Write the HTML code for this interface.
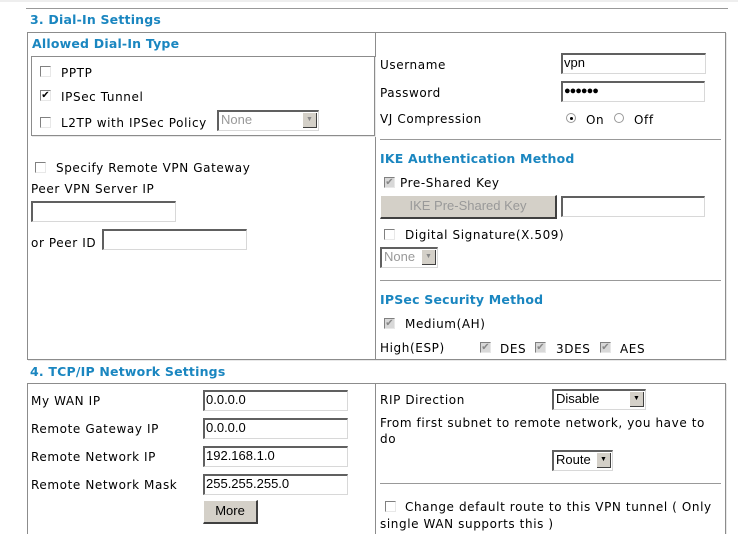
<!DOCTYPE html>
<html style="overflow:hidden;height:534px"><head><meta charset="utf-8"><style>
html,body{overflow:hidden}
body{margin:0;width:738px;height:534px;background:#fff;position:relative;overflow:hidden;font-family:"DejaVu Sans","Liberation Sans",sans-serif;font-size:12px;color:#000}
.t{position:absolute;line-height:16px;white-space:nowrap;letter-spacing:0.6px}
.h{position:absolute;line-height:16px;white-space:nowrap;color:#1a86c0;font-weight:bold;font-size:12.5px;letter-spacing:0.2px}
.b{position:absolute;border:1px solid #8c8c8c;box-shadow:1px 1px 0 #e8e8e8}
.l{position:absolute;background:#999;height:1px}
.v{position:absolute;background:#8c8c8c;width:1px}
.in{position:absolute;box-sizing:border-box;background:#fff;border-top:2px solid #606060;border-left:2px solid #606060;border-right:1px solid #d8d8d8;border-bottom:1px solid #d8d8d8;font-family:"Liberation Sans",sans-serif;font-size:13px;line-height:16px;padding-left:1px}
.cb{position:absolute;width:11px;height:11px;box-sizing:border-box;border-top:1px solid #808080;border-left:1px solid #808080;border-right:1px solid #e8e8e8;border-bottom:1px solid #e8e8e8;background:#fff;font-size:10px;line-height:9px;text-align:center}
.cb.g{background:#d8d8d8;color:#888}
.sel{position:absolute;box-sizing:border-box;background:#fff;border-top:2px solid #606060;border-left:2px solid #606060;border-right:1px solid #d8d8d8;border-bottom:1px solid #d8d8d8;font-family:"Liberation Sans",sans-serif;font-size:13px;line-height:16px;padding-left:2px}
.sel .ar{position:absolute;right:1px;top:1px;width:14px;height:15px;background:#d4d0c8;border-right:1px solid #404040;border-bottom:1px solid #404040;box-sizing:border-box;font-size:7px;line-height:14px;text-align:center}
.btn{position:absolute;box-sizing:border-box;background:#d4d0c8;border-top:1px solid #fff;border-left:1px solid #fff;border-right:2px solid #404040;border-bottom:2px solid #404040;font-family:"Liberation Sans",sans-serif;font-size:13px;text-align:center}
.rd{position:absolute;width:10px;height:10px;border-radius:50%;border:1px solid #999;box-sizing:border-box;background:#fff}
</style></head><body>
<div style="position:absolute;left:0;top:0;width:738px;height:2px;background:#eee"></div>
<div class="l" style="left:26px;top:8px;width:702px"></div>
<div class="h" style="left:30px;top:12px">3. Dial-In Settings</div>
<div class="b" style="left:27px;top:32px;width:697px;height:326px"></div>
<div class="v" style="left:375px;top:32px;height:327px"></div>
<div class="h" style="left:32px;top:36px">Allowed Dial-In Type</div>
<div class="b" style="left:31px;top:56px;width:342px;height:78px"></div>
<div class="cb" style="left:40px;top:66px"></div><div class="t" style="left:61px;top:65px">PPTP</div>
<div class="cb" style="left:40px;top:90px">✔</div><div class="t" style="left:61px;top:89px">IPSec Tunnel</div>
<div class="cb" style="left:40px;top:117px"></div><div class="t" style="left:61px;top:115px">L2TP with IPSec Policy</div>
<div class="sel" style="left:217px;top:110px;width:102px;height:21px;color:#999">None<div class="ar" style="color:#888">▼</div></div>
<div class="cb" style="left:35px;top:162px"></div><div class="t" style="left:56px;top:160px">Specify Remote VPN Gateway</div>
<div class="t" style="left:31px;top:181px">Peer VPN Server IP</div>
<div class="in" style="left:31px;top:201px;width:145px;height:21px"></div>
<div class="t" style="left:31px;top:235px">or Peer ID</div>
<div class="in" style="left:102px;top:229px;width:145px;height:21px"></div>

<div class="t" style="left:380px;top:57px">Username</div>
<div class="in" style="left:561px;top:53px;width:145px;height:21px">vpn</div>
<div class="t" style="left:380px;top:85px">Password</div>
<div class="in" style="left:561px;top:81px;width:144px;height:21px;font-size:11px;letter-spacing:-1px">●●●●●●</div>
<div class="t" style="left:380px;top:111px">VJ Compression</div>
<div class="rd" style="left:566px;top:113px"><div style="position:absolute;left:3px;top:3px;width:3px;height:3px;border-radius:50%;background:#000"></div></div>
<div class="t" style="left:586px;top:112px">On</div>
<div class="rd" style="left:614px;top:113px"></div>
<div class="t" style="left:634px;top:112px">Off</div>
<div class="l" style="left:380px;top:139px;width:341px"></div>
<div class="h" style="left:380px;top:151px">IKE Authentication Method</div>
<div class="cb g" style="left:384px;top:177px">✔</div><div class="t" style="left:400px;top:175px">Pre-Shared Key</div>
<div class="btn" style="left:380px;top:195px;width:177px;height:24px;line-height:20px;color:#999">IKE Pre-Shared Key</div>
<div class="in" style="left:561px;top:196px;width:144px;height:21px"></div>
<div class="cb" style="left:384px;top:229px"></div><div class="t" style="left:405px;top:227px">Digital Signature(X.509)</div>
<div class="sel" style="left:380px;top:247px;width:58px;height:21px;color:#999">None<div class="ar" style="color:#888">▼</div></div>
<div class="l" style="left:380px;top:280px;width:341px"></div>
<div class="h" style="left:380px;top:292px">IPSec Security Method</div>
<div class="cb g" style="left:384px;top:318px">✔</div><div class="t" style="left:405px;top:316px">Medium(AH)</div>
<div class="t" style="left:380px;top:340px">High(ESP)</div>
<div class="cb g" style="left:480px;top:342px">✔</div><div class="t" style="left:500px;top:341px">DES</div>
<div class="cb g" style="left:535px;top:342px">✔</div><div class="t" style="left:556px;top:341px">3DES</div>
<div class="cb g" style="left:600px;top:342px">✔</div><div class="t" style="left:620px;top:341px">AES</div>

<div class="h" style="left:30px;top:364px">4. TCP/IP Network Settings</div>
<div class="b" style="left:27px;top:383px;width:697px;height:160px;border-bottom:none"></div>
<div class="v" style="left:375px;top:383px;height:151px"></div>
<div class="t" style="left:31px;top:393px">My WAN IP</div>
<div class="in" style="left:203px;top:390px;width:145px;height:21px">0.0.0.0</div>
<div class="t" style="left:31px;top:421px">Remote Gateway IP</div>
<div class="in" style="left:203px;top:418px;width:145px;height:21px">0.0.0.0</div>
<div class="t" style="left:31px;top:449px">Remote Network IP</div>
<div class="in" style="left:203px;top:446px;width:145px;height:21px">192.168.1.0</div>
<div class="t" style="left:31px;top:477px">Remote Network Mask</div>
<div class="in" style="left:203px;top:474px;width:145px;height:21px">255.255.255.0</div>
<div class="btn" style="left:203px;top:500px;width:55px;height:24px;line-height:20px">More</div>

<div class="t" style="left:380px;top:392px">RIP Direction</div>
<div class="sel" style="left:552px;top:389px;width:94px;height:21px">Disable<div class="ar">▼</div></div>
<div class="t" style="left:380px;top:415px">From first subnet to remote network, you have to</div>
<div class="t" style="left:380px;top:431px">do</div>
<div class="sel" style="left:552px;top:450px;width:61px;height:21px">Route<div class="ar">▼</div></div>
<div class="l" style="left:380px;top:483px;width:341px"></div>
<div class="cb" style="left:385px;top:501px"></div><div class="t" style="left:405px;top:499px">Change default route to this VPN tunnel ( Only</div>
<div class="t" style="left:380px;top:516px">single WAN supports this )</div>
</body></html>
